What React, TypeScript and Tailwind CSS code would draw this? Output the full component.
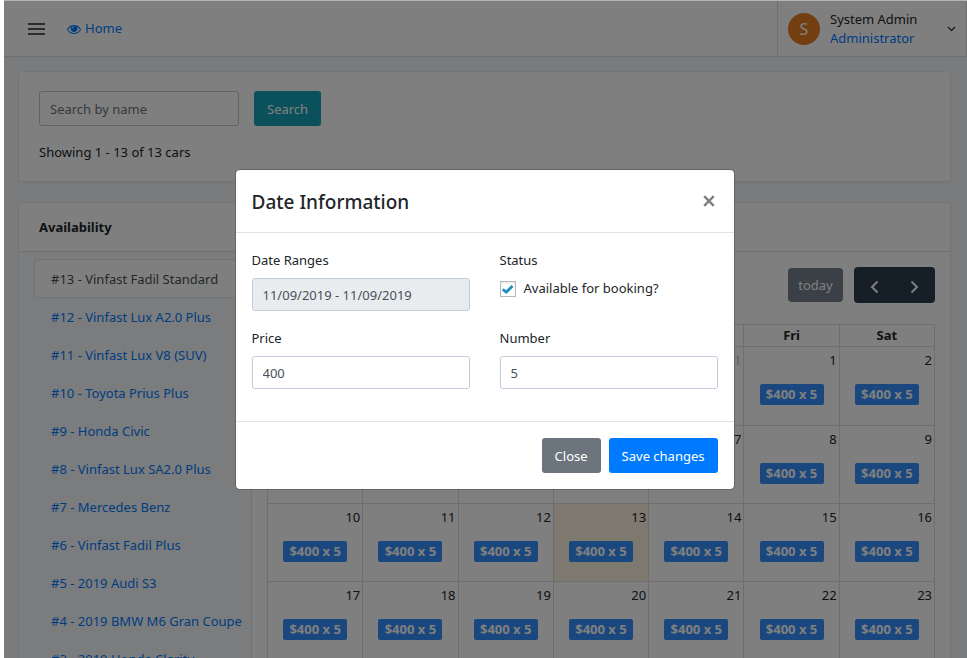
import React from "react";

const cars = [
  "#13 - Vinfast Fadil Standard",
  "#12 - Vinfast Lux A2.0 Plus",
  "#11 - Vinfast Lux V8 (SUV)",
  "#10 - Toyota Prius Plus",
  "#9 - Honda Civic",
  "#8 - Vinfast Lux SA2.0 Plus",
  "#7 - Mercedes Benz",
  "#6 - Vinfast Fadil Plus",
  "#5 - 2019 Audi S3",
  "#4 - 2019 BMW M6 Gran Coupe",
  "#3 - 2019 Honda Clarity",
];

const weekdays = ["Sun", "Mon", "Tue", "Wed", "Thu", "Fri", "Sat"];

const weeks = [
  [27, 28, 29, 30, 31, 1, 2],
  [3, 4, 5, 6, 7, 8, 9],
  [10, 11, 12, 13, 14, 15, 16],
  [17, 18, 19, 20, 21, 22, 23],
];

const TODAY = 13;

function EyeIcon() {
  return (
    <svg viewBox="0 0 1792 1792" className="size-3.5 fill-current" aria-hidden="true">
      <path d="M1664 960q-152-236-381-353 61 104 61 225 0 185-131.500 316.500t-316.500 131.500-316.500-131.500-131.500-316.500q0-121 61-225-229 117-381 353 133 205 333.500 326.500t434.500 121.500 434.500-121.500 333.500-326.500zm-720-384q0-20-14-34t-34-14q-125 0-214.500 89.500t-89.500 214.500q0 20 14 34t34 14 34-14 14-34q0-86 61-147t147-61q20 0 34-14t14-34zm848 384q0 34-20 69-140 230-376.500 368.500t-499.500 138.500-499.500-139-376.500-368q-20-35-20-69t20-69q140-229 376.500-368t499.500-139 499.500 139 376.500 368q20 35 20 69z" />
    </svg>
  );
}

function Header() {
  return (
    <header className="flex h-14 items-stretch border-b border-[#dedede] bg-white">
      <div className="flex flex-1 items-center pt-px pl-6">
        <button type="button" aria-label="Toggle menu" className="text-[#222]">
          <svg viewBox="0 0 18 12" className="h-3 w-[18px]" aria-hidden="true">
            <path d="M0 1h17M0 6h17M0 11h17" stroke="currentColor" strokeWidth="1.400" />
          </svg>
        </button>
        <a href="#home" className="ml-[21px] flex items-center gap-1 text-[#007bff]">
          <EyeIcon />
          Home
        </a>
      </div>
      <button type="button" className="flex w-[190px] items-center border-x border-[#dedede] pl-2.5 text-left">
        <span className="flex size-8 items-center justify-center rounded-full bg-[#e67e22] text-base text-white">S</span>
        <span className="ml-2.5 flex-1 leading-[19px]">
          <span className="block">System Admin</span>
          <span className="block text-[#007bff]">Administrator</span>
        </span>
        <svg viewBox="0 0 9 6" className="mr-2.5 h-1.5 w-[9px]" fill="none" aria-hidden="true">
          <path d="M1 1l3.500 3.500L8 1" stroke="currentColor" strokeWidth="1.200" />
        </svg>
      </button>
    </header>
  );
}

function SearchCard() {
  return (
    <section className="rounded border border-[#ebebeb] bg-white px-5 pt-[19px] pb-[18px] shadow-xs">
      <form className="flex gap-[15px]">
        <input
          type="text"
          aria-label="Search by name"
          placeholder="Search by name"
          className="h-[35px] w-[200px] rounded-[3px] border border-[#c0c5ca] px-2.5 placeholder:text-[#6c757d]"
        />
        <button type="button" className="h-[35px] rounded-[3px] bg-[#17a2b8] px-[13px] pt-0.5 text-white">
          Search
        </button>
      </form>
      <p className="mt-4 leading-[21px]">Showing 1 - 13 of 13 cars</p>
    </section>
  );
}

function Calendar() {
  return (
    <div className="min-w-0 flex-1 border-l border-[#dee2e6] bg-white p-[15px]">
      <div className="mb-[21px] flex items-center justify-end gap-[11px]">
        <button type="button" className="h-[34px] w-[55px] rounded bg-[#2c3e50] pt-0.5 text-white opacity-65">
          today
        </button>
        <div className="flex h-9 w-[81px] rounded bg-[#2c3e50] text-white">
          <button type="button" aria-label="Previous month" className="flex flex-1 items-center justify-center pt-1">
            <svg viewBox="0 0 9 14" className="h-3.5 w-[9px]" fill="none" aria-hidden="true">
              <path d="M7.500 1.500L2 7l5.500 5.500" stroke="currentColor" strokeWidth="2" />
            </svg>
          </button>
          <button type="button" aria-label="Next month" className="flex flex-1 items-center justify-center pt-1">
            <svg viewBox="0 0 9 14" className="h-3.5 w-[9px]" fill="none" aria-hidden="true">
              <path d="M1.500 1.500L7 7l-5.500 5.500" stroke="currentColor" strokeWidth="2" />
            </svg>
          </button>
        </div>
      </div>
      <table className="w-full table-fixed border-collapse">
        <thead>
          <tr className="h-[22px]">
            {weekdays.map((day) => (
              <th key={day} className="border border-[#ddd] p-0 text-center leading-[21px] font-bold">
                {day}
              </th>
            ))}
          </tr>
        </thead>
        <tbody>
          {weeks.map((week, row) => (
            <tr key={row} className="h-[78px] first:h-[79px]">
              {week.map((day) => {
                const other = row === 0 && day > 7;
                const today = row > 0 && day === TODAY;
                return (
                  <td key={day} className={`border border-[#ddd] p-0 align-top ${today ? "bg-[#fcf2dd]" : ""}`}>
                    <div className={`pt-[3px] pr-0.5 text-right leading-[21px] ${other ? "text-[#bcbdbf]" : ""}`}>{day}</div>
                    {!other && (
                      <div className="mx-auto mt-[13px] h-[21px] w-16 rounded-xs bg-[#3490fc] text-center leading-[21px] font-bold text-white">
                        $400 x 5
                      </div>
                    )}
                  </td>
                );
              })}
            </tr>
          ))}
        </tbody>
      </table>
    </div>
  );
}

function AvailabilityCard() {
  return (
    <section className="rounded border border-[#ebebeb] bg-white shadow-xs">
      <h2 className="border-b border-[#dee2e6] px-5 pt-3.5 pb-[13px] leading-[21px] font-bold">Availability</h2>
      <div className="flex">
        <nav aria-label="Cars" className="w-[232px] shrink-0 bg-[#f7f8fa] pt-[7px] pl-[15px]">
          {cars.map((car, i) => (
            <a
              key={car}
              href={`#car-${i}`}
              className={
                i === 0
                  ? "-mr-px block h-[39px] rounded-l border border-r-0 border-[#dee2e6] bg-white pl-4 leading-[38px] whitespace-nowrap text-[#495057]"
                  : "block h-[38px] pl-[17px] leading-[38px] whitespace-nowrap text-[#007bff]"
              }
            >
              {car}
            </a>
          ))}
        </nav>
        <Calendar />
      </div>
    </section>
  );
}

const field = "h-[33px] w-full rounded-[3px] border border-[#c3cdd9] px-2.5 text-[#495057]";

function DateModal() {
  return (
    <div
      role="dialog"
      aria-modal="true"
      aria-labelledby="modal-title"
      className="w-[500px] rounded-[5px] border border-black/20 bg-white bg-clip-padding"
    >
      <div className="flex items-center justify-between border-b border-[#dee2e6] p-4">
        <h1 id="modal-title" className="pt-0.5 text-[19px] leading-7 font-medium">
          Date Information
        </h1>
        <button type="button" aria-label="Close dialog" className="mr-[3px] text-[#808080]">
          <svg viewBox="0 0 12 12" className="size-3" fill="none" aria-hidden="true">
            <path d="M1.200 1.200l9.600 9.600M10.800 1.200l-9.600 9.600" stroke="currentColor" strokeWidth="2.400" />
          </svg>
        </button>
      </div>
      <div className="grid grid-cols-2 gap-x-[30px] gap-y-[17px] px-4 pt-[17px] pb-8">
        <div>
          <label htmlFor="ranges" className="mb-[7px] block leading-[21px]">
            Date Ranges
          </label>
          <input id="ranges" type="text" readOnly value="11/09/2019 - 11/09/2019" className={`${field} bg-[#e9ecef]`} />
        </div>
        <fieldset>
          <legend className="mb-[7px] leading-[21px]">Status</legend>
          <label className="flex h-[22px] items-center gap-2">
            <span className="relative flex size-4">
              <input
                type="checkbox"
                defaultChecked
                className="peer size-4 appearance-none border border-[#b4b9be] bg-white shadow-[inset_0_1px_2px_rgba(0,0,0,0.1)]"
              />
              <svg
                viewBox="0 0 16 16"
                className="pointer-events-none absolute inset-0 hidden size-4 peer-checked:block"
                fill="none"
                aria-hidden="true"
              >
                <path d="M2.800 8.200l3.400 3L12.500 5" stroke="#1e8cbe" strokeWidth="2.800" />
              </svg>
            </span>
            Available for booking?
          </label>
        </fieldset>
        <div>
          <label htmlFor="price" className="mb-[7px] block leading-[21px]">
            Price
          </label>
          <input id="price" type="text" defaultValue="400" className={`${field} bg-white`} />
        </div>
        <div>
          <label htmlFor="number" className="mb-[7px] block leading-[21px]">
            Number
          </label>
          <input id="number" type="text" defaultValue="5" className={`${field} bg-white`} />
        </div>
      </div>
      <div className="flex justify-end gap-2 border-t border-[#dee2e6] p-4">
        <button type="button" className="h-[35px] rounded-[3px] bg-[#6c757d] px-[13px] pt-0.5 text-white">
          Close
        </button>
        <button type="button" className="h-[35px] rounded-[3px] bg-[#007bff] px-[13px] pt-0.5 text-white">
          Save changes
        </button>
      </div>
    </div>
  );
}

export default function App() {
  return (
    <div className="h-screen overflow-hidden bg-white pl-1 font-['Noto_Sans','Open_Sans',sans-serif] text-[13px] text-[#212529]">
      <div className="relative h-full overflow-hidden border-t border-[#b3b6b5] bg-[#f5f6f9]">
        <Header />
        <main className="flex flex-col gap-5 py-3.5 pr-4 pl-3.5">
          <SearchCard />
          <AvailabilityCard />
        </main>
        <div className="absolute inset-0 flex items-center justify-center bg-black/50 pr-0.5">
          <DateModal />
        </div>
      </div>
    </div>
  );
}
